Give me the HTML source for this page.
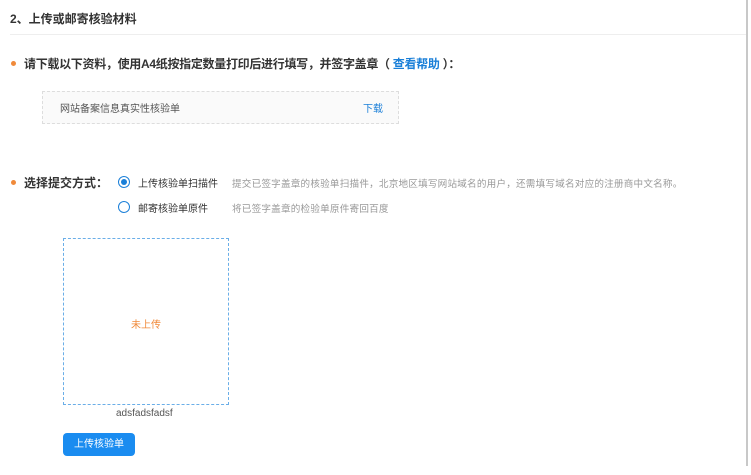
<!DOCTYPE html>
<html><head><meta charset="utf-8"><style>
body{margin:0;width:751px;height:475px;background:#fff;font-family:"Liberation Sans","Noto Sans CJK SC",sans-serif;position:relative;overflow:hidden;color:#333}
.a{position:absolute;white-space:nowrap}
</style></head><body>
<div class="a" style="left:0;top:0;width:746px;height:466px;border-right:2px solid #c8c8c8"></div>
<div class="a" style="left:10px;top:10px;font-size:12px;font-weight:bold;color:#333">2、上传或邮寄核验材料</div>
<div class="a" style="left:10px;top:34px;width:736px;height:1px;background:#eee"></div>
<div class="a" style="left:11px;top:61px;width:5px;height:5px;border-radius:50%;background:#f08a3a"></div>
<div class="a" style="left:24px;top:55px;font-size:12px;font-weight:bold;color:#333;letter-spacing:-0.3px">请下载以下资料，使用A4纸按指定数量打印后进行填写，并签字盖章（ <span style="color:#1a7fd8">查看帮助</span> ）：</div>
<div class="a" style="left:42px;top:91px;width:355px;height:31px;border:1px dashed #ddd;background:#fafafa"></div>
<div class="a" style="left:60px;top:100px;font-size:10px;color:#555">网站备案信息真实性核验单</div>
<div class="a" style="left:363px;top:100px;font-size:10px;color:#1a7fd8">下载</div>
<div class="a" style="left:11px;top:180px;width:5px;height:5px;border-radius:50%;background:#f08a3a"></div>
<div class="a" style="left:24px;top:174px;font-size:12px;font-weight:bold;color:#333">选择提交方式：</div>
<div class="a" style="left:118px;top:176px;width:10px;height:10px;border:1px solid #1a7fd8;border-radius:50%"></div>
<div class="a" style="left:121px;top:179px;width:6px;height:6px;border-radius:50%;background:#1a7fd8"></div>
<div class="a" style="left:138px;top:175px;font-size:10px;color:#333">上传核验单扫描件</div>
<div class="a" style="left:232px;top:176px;font-size:9.6px;color:#999;letter-spacing:0.2px">提交已签字盖章的核验单扫描件，北京地区填写网站域名的用户，还需填写域名对应的注册商中文名称。</div>
<div class="a" style="left:118px;top:201px;width:10px;height:10px;border:1px solid #1a7fd8;border-radius:50%"></div>
<div class="a" style="left:138px;top:200px;font-size:10px;color:#333">邮寄核验单原件</div>
<div class="a" style="left:232px;top:201px;font-size:9.6px;color:#999;letter-spacing:0.2px">将已签字盖章的检验单原件寄回百度</div>
<div class="a" style="left:63px;top:238px;width:164px;height:165px;border:1px dashed #6aaee8"></div>
<div class="a" style="left:131px;top:316px;font-size:10px;color:#f08a3a">未上传</div>
<div class="a" style="left:116px;top:408px;font-size:10px;color:#555">adsfadsfadsf</div>
<div class="a" style="left:63px;top:433px;width:72px;height:23px;border-radius:4px;background:#1a8cf0;color:#fff;font-size:10px;text-align:center;line-height:23px">上传核验单</div>
</body></html>
